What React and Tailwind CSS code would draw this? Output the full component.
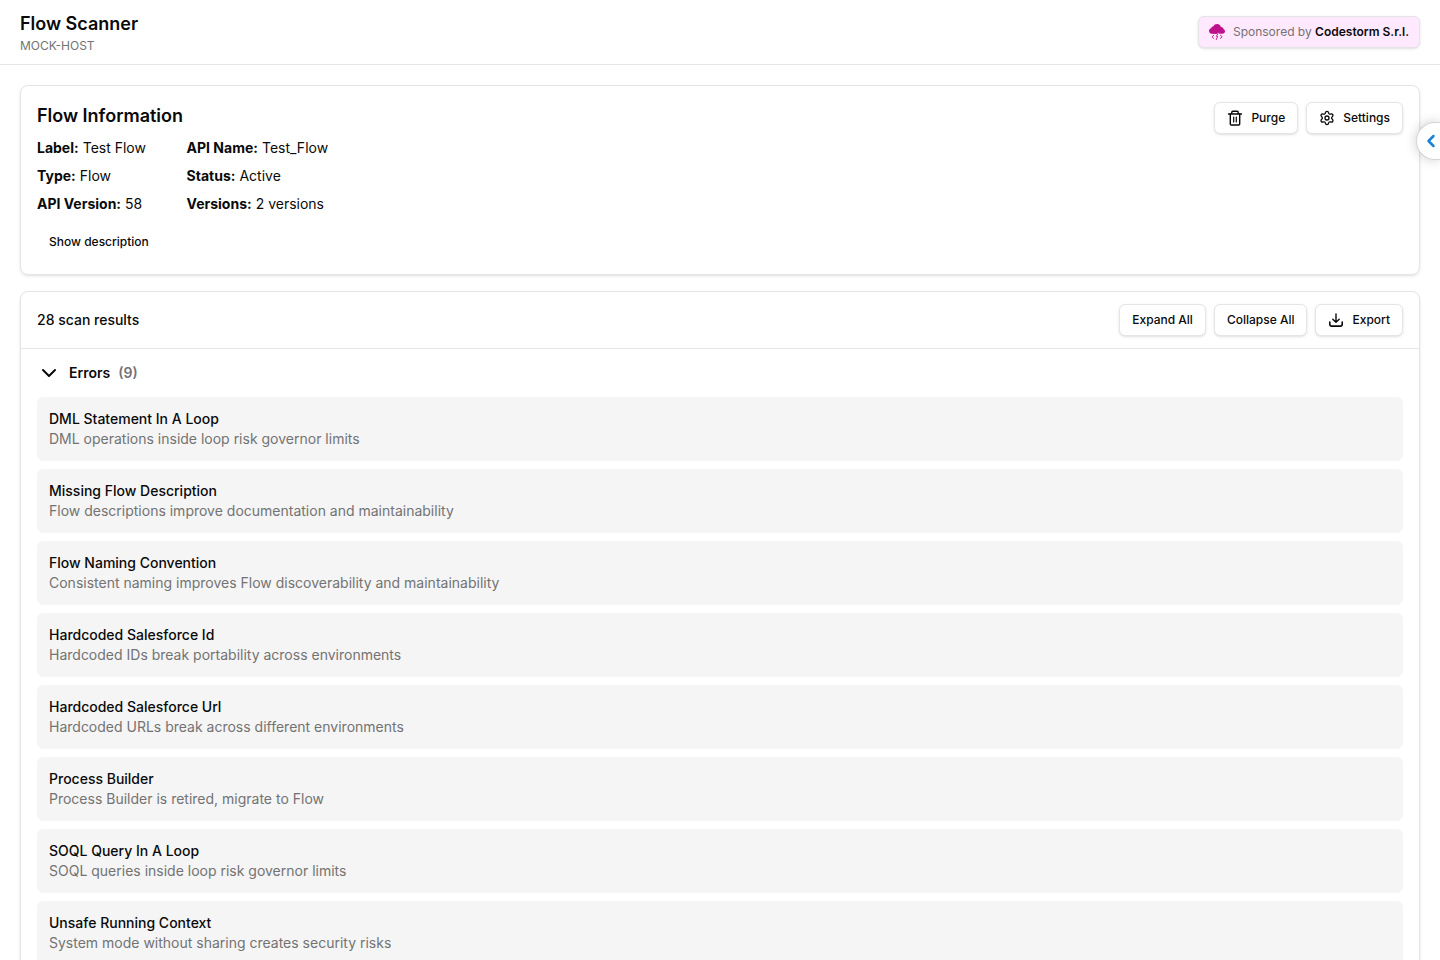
import React, { useState } from "react";
import { ChevronDown, ChevronLeft, Settings } from "lucide-react";

const flowInfo = [
  { label: "Label", value: "Test Flow" },
  { label: "API Name", value: "Test_Flow" },
  { label: "Type", value: "Flow" },
  { label: "Status", value: "Active" },
  { label: "API Version", value: "58" },
  { label: "Versions", value: "2 versions" },
];

const errors = [
  { name: "DML Statement In A Loop", message: "DML operations inside loop risk governor limits" },
  { name: "Missing Flow Description", message: "Flow descriptions improve documentation and maintainability" },
  { name: "Flow Naming Convention", message: "Consistent naming improves Flow discoverability and maintainability" },
  { name: "Hardcoded Salesforce Id", message: "Hardcoded IDs break portability across environments" },
  { name: "Hardcoded Salesforce Url", message: "Hardcoded URLs break across different environments" },
  { name: "Process Builder", message: "Process Builder is retired, migrate to Flow" },
  { name: "SOQL Query In A Loop", message: "SOQL queries inside loop risk governor limits" },
  { name: "Unsafe Running Context", message: "System mode without sharing creates security risks" },
];

function OutlineButton({ children, onClick }) {
  return (
    <button
      type="button"
      onClick={onClick}
      className="flex h-8 items-center gap-2 rounded-md border border-neutral-200 bg-white px-3 text-xs font-medium shadow-sm hover:bg-neutral-100"
    >
      {children}
    </button>
  );
}

function TrashIcon() {
  return (
    <svg
      viewBox="0 0 16 16"
      className="size-4"
      fill="none"
      stroke="currentColor"
      strokeWidth="1.4"
      strokeLinecap="round"
      strokeLinejoin="round"
      aria-hidden="true"
    >
      <path d="M1.500 4h13M4.800 4V2.200a1 1 0 0 1 1-1h4.400a1 1 0 0 1 1 1V4" />
      <path d="M3.300 4v10a1 1 0 0 0 1 1h7.400a1 1 0 0 0 1-1V4" />
      <path strokeWidth="1.2" d="M6.700 7v5M9.300 7v5" />
    </svg>
  );
}

function ExportIcon() {
  return (
    <svg
      viewBox="0 0 16 16"
      className="size-4"
      fill="none"
      stroke="currentColor"
      strokeWidth="1.4"
      strokeLinecap="round"
      strokeLinejoin="round"
      aria-hidden="true"
    >
      <path d="M8 2v8M4.800 7.200 8 10.300l3.200-3.100" />
      <path strokeWidth="1.6" d="M1.800 10v2.600A1.500 1.500 0 0 0 3.300 14.100h9.400a1.500 1.500 0 0 0 1.500-1.500V10" />
    </svg>
  );
}

function StormLogo() {
  return (
    <svg viewBox="0 0 16 16" className="size-4" aria-hidden="true">
      <path
        fill="#be128c"
        d="M2.500 9.700C1 9.500 0 8.400 0 7c0-1.300.9-2.400 2.200-2.700C2.500 3 3.400 2.300 4.500 2.300 5.100.9 6.400 0 8 0c1.900 0 3.500 1.300 3.900 3.100C13.400 3 14.500 4 14.600 5.200 15.500 5.600 16 6.400 16 7.300c0 1.400-1.100 2.400-2.500 2.400h-3L9.200 8.600 8 9.900z"
      />
      <path
        fill="none"
        stroke="#be128c"
        strokeWidth="0.9"
        strokeLinecap="round"
        strokeLinejoin="round"
        d="M4.800 11.200 3 12.800l1.800 1.600M11.400 11.200l1.800 1.600-1.800 1.600M9 9.600 7.300 12.300h1.300L7.300 15.600"
      />
    </svg>
  );
}

export default function App() {
  const [open, setOpen] = useState(true);
  const [showDescription, setShowDescription] = useState(false);

  return (
    <div className="min-h-screen bg-white font-['Inter',sans-serif] text-sm text-neutral-950">
      <header className="flex items-center justify-between border-b border-neutral-200 px-5 py-2.5">
        <div className="flex flex-col gap-0.5 pt-0.5">
          <h1 className="text-lg leading-6 font-semibold">Flow Scanner</h1>
          <p className="text-xs text-neutral-500">MOCK-HOST</p>
        </div>
        <a
          href="#sponsor"
          className="flex h-8 items-center gap-2 rounded-md border border-neutral-200 bg-[#ffe9fe] px-2.5 text-xs shadow-sm"
        >
          <StormLogo />
          <span className="text-neutral-500">
            Sponsored by <strong className="font-semibold text-neutral-950">Codestorm S.r.l.</strong>
          </span>
        </a>
      </header>

      <main className="flex flex-col gap-4 p-5">
        <section className="flex items-start justify-between rounded-lg border border-neutral-200 p-4 shadow-sm">
          <div>
            <h2 className="text-lg leading-7 font-semibold">Flow Information</h2>
            <dl className="mt-2 grid w-fit grid-cols-2 gap-2">
              {flowInfo.map((item) => (
                <div key={item.label} className="flex gap-1 whitespace-nowrap">
                  <dt className="font-bold">{item.label}:</dt>
                  <dd>{item.value}</dd>
                </div>
              ))}
            </dl>
            <button
              type="button"
              onClick={() => setShowDescription(!showDescription)}
              className="mt-3 h-8 rounded-md px-3 text-xs font-medium hover:bg-neutral-100"
            >
              {showDescription ? "Hide description" : "Show description"}
            </button>
          </div>
          <div className="flex gap-2">
            <OutlineButton>
              <TrashIcon />
              Purge
            </OutlineButton>
            <OutlineButton>
              <Settings className="size-4" />
              Settings
            </OutlineButton>
          </div>
        </section>

        <section className="rounded-lg border border-neutral-200 shadow-sm">
          <div className="flex items-center justify-between border-b border-neutral-200 px-4 py-3">
            <h2 className="font-medium">28 scan results</h2>
            <div className="flex gap-2">
              <OutlineButton onClick={() => setOpen(true)}>Expand All</OutlineButton>
              <OutlineButton onClick={() => setOpen(false)}>Collapse All</OutlineButton>
              <OutlineButton>
                <ExportIcon />
                Export
              </OutlineButton>
            </div>
          </div>
          <button
            type="button"
            aria-expanded={open}
            onClick={() => setOpen(!open)}
            className="flex h-12 w-full items-center gap-2 px-4 font-semibold"
          >
            <ChevronDown className={open ? "size-6" : "size-6 -rotate-90"} />
            Errors
            <span className="text-neutral-500">(9)</span>
          </button>
          {open && (
            <ul className="flex flex-col gap-2 px-4 pb-4">
              {errors.map((item) => (
                <li key={item.name} className="rounded-md bg-neutral-100 p-3">
                  <h3 className="font-medium">{item.name}</h3>
                  <p className="text-neutral-500">{item.message}</p>
                </li>
              ))}
            </ul>
          )}
        </section>
      </main>

      <button
        type="button"
        aria-label="Open panel"
        className="fixed top-[122px] right-0 flex h-[38px] w-6 items-center justify-center rounded-l-full border border-r-0 border-neutral-300 bg-white pl-1 text-[#1b83d6] shadow-[0_0_12px_rgba(0,0,0,0.2)]"
      >
        <ChevronLeft className="size-5 shrink-0" strokeWidth={3} />
      </button>
    </div>
  );
}
